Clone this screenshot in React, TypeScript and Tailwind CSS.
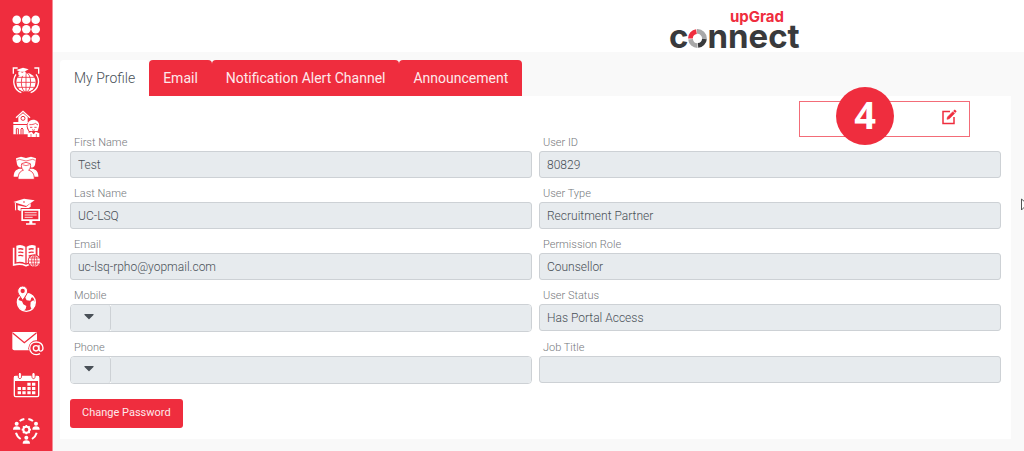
import React, { FC, ReactNode } from "react";
import { FaCaretDown } from "react-icons/fa";

type NavItem = {
	label: string;
	icon: ReactNode;
};

type FieldProps = {
	id: string;
	label: string;
	value?: string;
};

const RED = "#ef2d3e";

const NAV_ITEMS: NavItem[] = [
	{
		label: "Study destinations",
		icon: (
			<>
				<circle cx="42" cy="52" r="29" fill="#fff" />
				<g fill="none" stroke={RED} strokeWidth="2.5">
					<ellipse cx="42" cy="52" rx="14" ry="29" />
					<path d="M42 23v58M13 52h58M18 37h48M18 67h48" />
				</g>
				<g fill="none" stroke="#fff" strokeWidth="4">
					<path d="M4 26V9h13M67 9h13v17" />
					<path d="M12 28C0 45 4 74 28 83M72 28C86 45 80 74 56 83" />
				</g>
				<path d="M13 15 33 8l17 5-19 10zM19 20v9l12 4 10-5v-8z" fill="#fff" />
			</>
		),
	},
	{
		label: "Schools",
		icon: (
			<>
				<path d="M12 26 33 7l21 19" fill="none" stroke="#fff" strokeWidth="4" />
				<path d="M19 24 33 13l14 11v17H19z" fill="#fff" />
				<circle cx="33" cy="28" r="6" fill="none" stroke={RED} strokeWidth="3" />
				<path d="M4 39h46v6H4zM4 48h46v28H4z" fill="#fff" />
				<path
					d="M13 77V60q3-6 6 0v17M27 77V60q3-6 6 0v17"
					fill="none"
					stroke={RED}
					strokeWidth="3"
				/>
				<circle cx="64" cy="52" r="20" fill={RED} />
				<path
					d="M48 57c-5-13 3-25 15-25 11 0 20 7 18 20l-4 14H52z"
					fill="#fff"
				/>
				<path d="M52 47c8 0 15-1 18-4l8 5" fill="none" stroke={RED} strokeWidth="2.5" />
				<path d="M54 55h7m6 0h7M60 62q5 4 9 0" fill="none" stroke={RED} strokeWidth="2.5" />
				<path d="M47 84V73l12-5 6 8 6-8 11 5v11z" fill="#fff" />
				<path d="M57 75v9m16-9v9" stroke={RED} strokeWidth="2" />
			</>
		),
	},
	{
		label: "Students",
		icon: (
			<>
				<path
					d="M12 16 27 11l15 4 15-4 15 5-3 20c-3 7-9 9-14 7H29c-7 2-12-2-14-9z"
					fill="#fff"
				/>
				<path d="M5 71c0-14 6-22 18-24h38c12 2 18 10 18 24z" fill="#fff" />
				<path
					d="M18 79c0-16 6-25 16-27-6-6-7-14-5-20l13-4 13 4c2 6 1 14-5 20 11 2 17 11 17 27z"
					fill="#fff"
					stroke={RED}
					strokeWidth="2.5"
				/>
				<path
					d="m14 22 8-3 20 5 20-5 8 3M31 35l11 3 11-3"
					fill="none"
					stroke={RED}
					strokeWidth="2"
				/>
			</>
		),
	},
	{
		label: "Courses",
		icon: (
			<>
				<path d="m4 15 32-10 32 5-25 17z" fill="#fff" />
				<path d="M17 25v13c7 5 16 6 25 0l14-9V19L42 30z" fill="#fff" />
				<path d="m10 18 1 22" stroke="#fff" strokeWidth="3" />
				<circle cx="36" cy="15" r="2.5" fill={RED} />
				<path d="M26 33h60v43H26z" fill={RED} />
				<path d="M30.5 38.5h51v31h-51z" fill="none" stroke="#fff" strokeWidth="5" />
				<path d="M38 47h36M38 54h36M38 61h24" stroke="#fff" strokeWidth="2.5" />
				<path d="M52 70h9v9h-9zM42 79h29v4H42z" fill="#fff" />
			</>
		),
	},
	{
		label: "Learning resources",
		icon: (
			<>
				<path d="M5 20v52q21-6 37 2 16-8 37-2V20" fill="none" stroke="#fff" strokeWidth="5" />
				<path d="M13 14q15-5 27 3v50q-13-7-27-3zM71 14q-15-5-27 3v50q13-7 27-3z" fill="#fff" />
				<path
					d="M19 24q8-2 15 1M19 34q8-2 15 1M19 44q8-2 15 1M50 25q7-3 15-1M50 35q7-3 15-1M50 45q7-3 15-1"
					fill="none"
					stroke={RED}
					strokeWidth="4"
				/>
				<circle cx="67" cy="60" r="20" fill={RED} />
				<circle cx="67" cy="60" r="17" fill="#fff" />
				<g fill="none" stroke={RED} strokeWidth="2.5">
					<ellipse cx="67" cy="60" rx="8" ry="17" />
					<path d="M67 43v34M50 60h34M53 51h28M53 69h28" />
				</g>
			</>
		),
	},
	{
		label: "Locations",
		icon: (
			<>
				<circle cx="43" cy="52" r="27" fill="none" stroke="#fff" strokeWidth="4" />
				<path d="M17 44 30 49l4 9 9 5-2 9-6 5C22 72 16 60 17 44z" fill="#fff" />
				<path d="M43 26q14-3 22 10l-7 2-3 9-11-1-4-8z" fill="#fff" />
				<path d="m56 51 8-5 6 6-3 13-9 7-3-9z" fill="#fff" />
				<path
					d="M32 46C23 32 17 26 17 18a15 15 0 0 1 30 0c0 8-6 14-15 28z"
					fill="#fff"
					stroke={RED}
					strokeWidth="3"
				/>
				<circle cx="32" cy="18" r="6.5" fill={RED} />
			</>
		),
	},
	{
		label: "Messages",
		icon: (
			<>
				<path d="M4 9h67q4 0 4 5v50H7q-6 0-6-6V13q0-4 3-4z" fill="#fff" />
				<path d="m2 12 35 29 36-29" fill="none" stroke={RED} strokeWidth="4" />
				<circle cx="73" cy="58" r="24" fill={RED} />
				<g fill="none" stroke="#fff" strokeWidth="4">
					<circle cx="72" cy="58" r="8" />
					<path d="M81 48v13c0 8 12 7 12-4 0-11-9-18-20-18-12 0-20 8-20 19s9 19 20 19q6 0 11-3" />
				</g>
			</>
		),
	},
	{
		label: "Calendar",
		icon: (
			<>
				<rect x="7" y="10" width="73" height="61" rx="4" fill="none" stroke="#fff" strokeWidth="4" />
				<path d="M6 9h75v15H6z" fill="#fff" />
				<path d="M19 4v10q5 6 9 0V4M60 4v10q5 6 9 0V4" fill="#fff" stroke={RED} strokeWidth="3" />
				<path d="M21 0h5v14h-5zM62 0h5v14h-5z" fill="#fff" />
				<path
					d="M46 29h10v9H46zM60 29h10v9H60zM17 42h10v9H17zM31 42h10v9H31zM46 42h10v9H46zM60 42h10v9H60zM17 55h10v9H17zM31 55h10v9H31zM46 55h10v9H46zM60 55h10v9H60z"
					fill="#fff"
				/>
			</>
		),
	},
	{
		label: "Team settings",
		icon: (
			<>
				<path
					d="M23 12a32 32 0 0 1 14-6M49 6a32 32 0 0 1 14 6M12 47a32 32 0 0 0 14 19M74 47a32 32 0 0 1-14 19"
					fill="none"
					stroke="#fff"
					strokeWidth="6"
				/>
				<circle cx="43" cy="38" r="9" fill="none" stroke="#fff" strokeWidth="6" />
				<path
					d="M43 24v6M43 46v6M29 38h6M51 38h6M33 28l4 4M49 44l4 4M53 28l-4 4M37 44l-4 4"
					stroke="#fff"
					strokeWidth="5"
				/>
				<g fill="#fff">
					<circle cx="14" cy="20" r="6" />
					<path d="M3 38q0-10 11-10t11 10z" />
					<circle cx="72" cy="20" r="6" />
					<path d="M61 38q0-10 11-10t11 10z" />
					<circle cx="43" cy="62" r="6" />
					<path d="M32 80q0-10 11-10t11 10z" />
				</g>
			</>
		),
	},
];

const TABS = ["My Profile", "Email", "Notification Alert Channel", "Announcement"];

const INPUT_STYLE =
	"block w-full min-w-0 bg-[#e7ebee] px-[7px] text-xs font-light text-[#495057] outline-none";

const Sidebar: FC = (): React.ReactElement => {
	return (
		<nav className="flex w-[53px] shrink-0 flex-col border-r border-[#f58d96] bg-[#ef2d3e]">
			<button type="button" aria-label="Menu" className="flex h-[57px] items-center justify-center">
				<svg viewBox="0 0 28 28" className="size-7" fill="#fff">
					{[4.7, 14.3, 23.7].map((cy) =>
						[4.7, 14.3, 23.7].map((cx) => <circle key={`${cx}-${cy}`} cx={cx} cy={cy} r="4.3" />),
					)}
				</svg>
			</button>
			{NAV_ITEMS.map((item) => (
				<button
					key={item.label}
					type="button"
					aria-label={item.label}
					className="flex h-11 items-center justify-center"
				>
					<svg viewBox="0 0 84 84" className="size-7 overflow-visible">
						{item.icon}
					</svg>
				</button>
			))}
		</nav>
	);
};

const Logo: FC = (): React.ReactElement => {
	return (
		<div className="flex w-[131px] flex-col font-['Inter',sans-serif] font-bold">
			<span className="self-end pr-4 text-[15px] leading-[15px] text-[#ef2d3e]">upGrad</span>
			<span className="flex items-center text-[33px] leading-[22px] text-[#393a3c]">
				c
				<svg viewBox="0 0 18 18" className="mt-[5px] size-[19px]" fill="none" strokeWidth="4.5">
					<path d="M2.3 9A6.7 6.7 0 0 1 8 2.4" stroke="#ef2d3e" />
					<path d="M8.5 2.3a6.7 6.7 0 0 1 7.1 7" stroke="#a8a8a8" />
					<path d="M15.6 9.500a6.7 6.7 0 0 1-6.1 6.100" stroke="#393a3c" />
					<path d="M9 15.7a6.7 6.7 0 0 1-6.600-6" stroke="#a8a8a8" />
				</svg>
				nnect
			</span>
		</div>
	);
};

const Label: FC<{ htmlFor: string; children: ReactNode }> = ({ htmlFor, children }) => (
	<label
		htmlFor={htmlFor}
		className="mb-[3px] block pl-1 text-[11px] leading-[11px] font-light text-[#75787c]"
	>
		{children}
	</label>
);

const Field: FC<FieldProps> = ({ id, label, value = "" }) => (
	<div>
		<Label htmlFor={id}>{label}</Label>
		<input
			id={id}
			readOnly
			defaultValue={value}
			className={`${INPUT_STYLE} h-[27px] rounded-[3px] border border-[#cdd1d5]`}
		/>
	</div>
);

// Number input with a country code picker in front
const PhoneField: FC<FieldProps> = ({ id, label, value = "" }) => (
	<div>
		<Label htmlFor={id}>{label}</Label>
		<div className="flex h-7 overflow-hidden rounded border border-[#cdd1d5]">
			<div className="relative w-10 shrink-0">
				<select
					aria-label={`${label} country code`}
					className="size-full appearance-none rounded-r-[3px] border-r border-[#cdd1d5] bg-[#e7ebee] outline-none"
				/>
				<FaCaretDown className="pointer-events-none absolute top-[3px] left-[10px] size-4 text-[#495057]" />
			</div>
			<input id={id} readOnly defaultValue={value} className={INPUT_STYLE} />
		</div>
	</div>
);

const App: FC = (): React.ReactElement => {
	return (
		<div className="relative flex min-h-screen overflow-hidden bg-[#f9f9f9] font-['Roboto',sans-serif]">
			<Sidebar />
			<div className="min-w-0 flex-1">
				<header className="flex h-[52px] justify-end bg-white pt-[9px] pr-[224px]">
					<Logo />
				</header>

				<main className="pt-2 pr-[13px] pl-[7px]">
					<div role="tablist" className="flex">
						{TABS.map((tab, idx) => (
							<button
								key={tab}
								type="button"
								role="tab"
								aria-selected={idx === 0}
								className={`h-9 rounded-t px-[14px] text-sm ${
									idx === 0
										? "bg-white font-light text-[#495057]"
										: "bg-[#ef2d3e] font-normal text-[#fde9eb]"
								}`}
							>
								{tab}
							</button>
						))}
					</div>

					<section className="bg-white px-[10px] pt-[5px] pb-[11px]">
						<div className="mr-[31px] ml-auto flex h-9 w-[171px] items-center justify-end border border-[#f36c78] pr-3">
							{/* Step marker */}
							<div className="relative mr-[47px] h-7 w-[58px]">
								<span className="absolute -top-[18px] left-0 flex size-[58px] items-center justify-center rounded-full bg-[#ef2d3e] pb-1 font-['Open_Sans',sans-serif] text-[38px] font-bold text-white">
									4
								</span>
							</div>
							<button type="button" aria-label="Edit profile" className="-mt-1">
								<svg viewBox="0 0 16 16" className="size-4" fill="none" stroke={RED} strokeWidth="1.5">
									<path d="M9 2.500H2v12h11V8" />
									<path d="m6 10.300.5-2.300 5.300-5.300 1.800 1.800-5.300 5.300z" fill={RED} strokeWidth=".6" />
									<path d="m13 1.200 1.900 1.900" strokeWidth="2.200" />
								</svg>
							</button>
						</div>

						<form>
							<div className="grid grid-cols-2 gap-x-[7px] gap-y-[10px]">
								<Field id="first-name" label="First Name" value="Test" />
								<Field id="user-id" label="User ID" value="80829" />
								<Field id="last-name" label="Last Name" value="UC-LSQ" />
								<Field id="user-type" label="User Type" value="Recruitment Partner" />
								<Field id="email" label="Email" value="uc-lsq-rpho@yopmail.com" />
								<Field id="role" label="Permission Role" value="Counsellor" />
								<PhoneField id="mobile" label="Mobile" />
								<Field id="status" label="User Status" value="Has Portal Access" />
								<PhoneField id="phone" label="Phone" />
								<Field id="job-title" label="Job Title" />
							</div>
							<button
								type="button"
								className="mt-[15px] block h-[29px] rounded-[3px] bg-[#ef2d3e] px-3 text-[11px] text-[#fde9eb]"
							>
								Change Password
							</button>
						</form>
					</section>
				</main>
			</div>

			{/* Mouse pointer at the window edge */}
			<svg
				viewBox="0 0 12 14"
				className="absolute top-[198px] -right-[9px] h-[14px] w-3"
				fill="#fff"
				stroke="#555"
			>
				<path d="M.5 1v11l3-3h6z" />
			</svg>
		</div>
	);
};

export default App;
